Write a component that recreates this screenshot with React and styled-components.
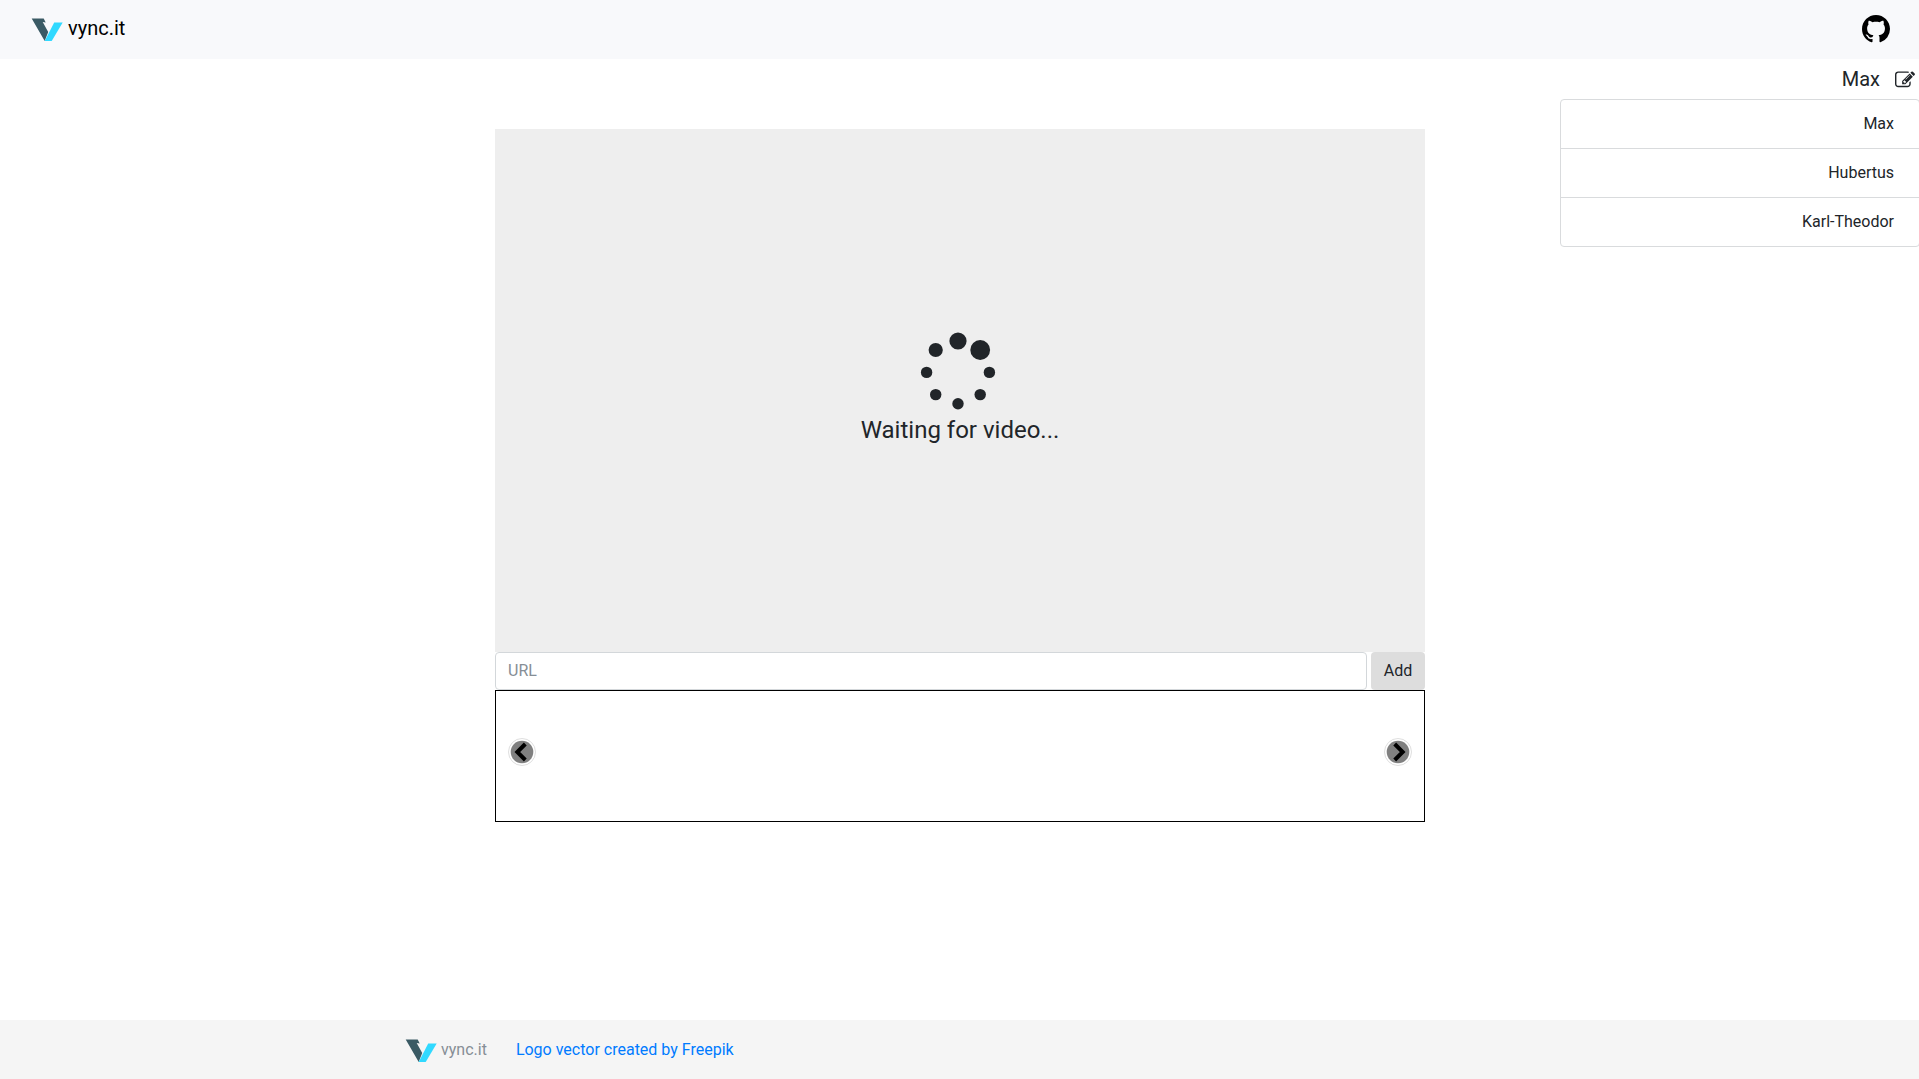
import React from 'react';
import styled, { createGlobalStyle } from 'styled-components';

const GlobalStyle = createGlobalStyle`
  *, *::before, *::after { box-sizing: border-box; }
  body {
    margin: 0;
    background: #fff;
    color: #212529;
    font: 400 16px/1.5 Roboto, "Liberation Sans", sans-serif;
    overflow: hidden;
  }
`;

const Page = styled.div`
  display: flex;
  flex-direction: column;
  height: 100vh;
`;

const Header = styled.header`
  display: flex;
  flex: none;
  align-items: center;
  justify-content: space-between;
  height: 59px;
  padding: 0 29px 2px 31px;
  background: #f8f9fb;
`;

const Brand = styled.a`
  display: flex;
  align-items: center;
  gap: ${(p) => (p.$muted ? '4px' : '5px')};
  color: ${(p) => (p.$muted ? '#868e96' : '#000')};
  font-size: ${(p) => (p.$muted ? '16px' : '20px')};
  padding-bottom: ${(p) => (p.$muted ? '0' : '2px')};

  svg {
    display: block;
    margin-top: ${(p) => (p.$muted ? '2px' : '5px')};
  }
`;

const RepoLink = styled.a`
  display: flex;
  color: #000;
`;

const Main = styled.main`
  display: grid;
  flex: 1;
  grid-template-columns: 495px 930px 135px 360px;
  align-items: start;
`;

const Room = styled.section`
  grid-column: 2;
  display: flex;
  flex-direction: column;
  padding-top: 70px;
`;

const Player = styled.div`
  display: flex;
  flex-direction: column;
  align-items: center;
  height: 523px;
  padding-top: 202px;
  background: #eee;
`;

const Waiting = styled.p`
  margin: 0;
  padding-top: 2px;
  font-size: 24px;
  line-height: 36px;
`;

const UrlForm = styled.form`
  display: flex;
  gap: 4px;
  height: 38px;
`;

const UrlInput = styled.input`
  flex: 1;
  min-width: 0;
  padding: 6px 12px;
  border: 1px solid #d3d7da;
  border-radius: 4px;
  background: #fff;
  font: inherit;

  &::placeholder { color: #868e96; opacity: 1; }
`;

const AddButton = styled.button`
  width: 54px;
  padding: 0;
  border: 0;
  border-radius: 4px;
  background: #ddd;
  color: #212529;
  font: inherit;
`;

const Playlist = styled.div`
  display: flex;
  align-items: center;
  justify-content: space-between;
  height: 132px;
  padding: 0 12px 8px;
  border: 1px solid #000;
`;

const ArrowButton = styled.button`
  display: flex;
  padding: 0;
  border: 0;
  background: none;
  transform: ${(p) => (p.$next ? 'scaleX(-1)' : 'none')};
`;

const Sidebar = styled.aside`
  grid-column: 4;
  display: flex;
  flex-direction: column;
`;

const Profile = styled.div`
  display: flex;
  align-items: center;
  justify-content: flex-end;
  gap: 15px;
  height: 40px;
  padding-right: 5px;
  font-size: 20px;

  svg { margin-top: 1px; }
`;

const UserList = styled.ul`
  margin: 0;
  padding: 0;
  border: 1px solid #d9dbdd;
  border-radius: 4px;
  background: #fff;
  list-style: none;
`;

const User = styled.li`
  height: 49px;
  padding: 12px 25px 12px 20px;
  text-align: right;

  & + & { border-top: 1px solid #d9dbdd; }
  &:first-child { height: 48px; }
`;

const Footer = styled.footer`
  display: flex;
  flex: none;
  align-items: center;
  gap: 29px;
  height: 59px;
  padding-left: 405px;
  background: #f5f5f5;
`;

const CreditLink = styled.a`
  color: #007bff;
`;

const Logo = () => (
  <svg width="32" height="24" viewBox="-.7 0 32 24" fill="none">
    <path d="M0 .5h12l2 4-3-.5 5.5 10-3.5 9Z" fill="#3a5a64" />
    <path d="M22.5 4.5H31L20 23h-7Z" fill="#30d9ff" />
  </svg>
);

const GithubMark = () => (
  <svg width="28" height="28" viewBox="0 0 16 16" fill="currentColor">
    <path fillRule="evenodd" d="M8 0C3.58 0 0 3.58 0 8c0 3.54 2.29 6.53 5.47 7.59.4.07.55-.17.55-.38 0-.19-.01-.82-.01-1.49-2.01.37-2.53-.49-2.69-.94-.09-.23-.48-.94-.82-1.13-.28-.15-.68-.52-.01-.53.63-.01 1.08.58 1.23.82.72 1.21 1.87.87 2.33.66.07-.52.28-.87.51-1.07-1.78-.2-3.64-.89-3.64-3.95 0-.87.31-1.59.82-2.15-.08-.2-.36-1.02.08-2.12 0 0 .67-.21 2.2.82.64-.18 1.32-.27 2-.27s1.36.09 2 .27c1.53-1.04 2.2-.82 2.2-.82.44 1.1.16 1.92.08 2.12.51.56.82 1.27.82 2.15 0 3.07-1.87 3.75-3.65 3.95.29.25.54.73.54 1.48 0 1.07-.01 1.93-.01 2.2 0 .21.15.46.55.38A8.01 8.01 0 0 0 16 8c0-4.42-3.58-8-8-8Z" />
  </svg>
);

const EditIcon = () => (
  <svg width="20" height="20" viewBox="0 0 1792 1792" fill="currentColor">
    <path d="M888 1184l116-116-152-152-116 116v56h96v96h56zm440-720q-16-16-33 1l-350 350q-17 17-1 33t33-1l350-350q17-17 1-33zm80 594v190q0 119-84.5 203.5t-203.5 84.5h-832q-119 0-203.5-84.5t-84.5-203.5v-832q0-119 84.5-203.5t203.5-84.5h832q63 0 117 25 15 7 18 23 3 17-9 29l-49 49q-14 14-32 8-23-6-45-6h-832q-66 0-113 47t-47 113v832q0 66 47 113t113 47h832q66 0 113-47t47-113v-126q0-13 9-22l64-64q15-15 35-7t20 29zm-96-738l288 288-672 672h-288v-288zm444 132l-92 92-288-288 92-92q28-28 68-28t68 28l152 152q28 28 28 68t-28 68z" />
  </svg>
);

const dots = [
  [38, 9, 8.6], [15.7, 18, 7.1], [6.6, 40.4, 5.7], [15.7, 62.6, 5.7],
  [38, 71.8, 5.7], [60.2, 62.6, 5.7], [69.4, 40.4, 5.7], [60.2, 18, 9.9],
];

const Spinner = () => (
  <svg width="80" height="79" viewBox="0 -1 80 79" fill="#212529">
    {dots.map(([x, y, r]) => <circle key={`${x}-${y}`} cx={x} cy={y} r={r} />)}
  </svg>
);

const Arrow = () => (
  <svg width="28" height="28" viewBox="0 0 28 28" fill="none">
    <circle cx="14" cy="14" r="13.5" fill="#fff" stroke="#d6d6d6" strokeWidth=".8" />
    <circle cx="14" cy="14" r="11.3" fill="#808080" />
    <path d="m17.3 6-8 8 8 8" stroke="#000" strokeWidth="4" />
  </svg>
);

const users = ['Max', 'Hubertus', 'Karl-Theodor'];

export default function App() {
  return (
    <Page>
      <GlobalStyle />
      <Header>
        <Brand><Logo />vync.it</Brand>
        <RepoLink aria-label="GitHub"><GithubMark /></RepoLink>
      </Header>
      <Main>
        <Room>
          <Player>
            <Spinner />
            <Waiting>Waiting for video...</Waiting>
          </Player>
          <UrlForm onSubmit={(e) => e.preventDefault()}>
            <UrlInput placeholder="URL" />
            <AddButton>Add</AddButton>
          </UrlForm>
          <Playlist>
            <ArrowButton aria-label="Previous"><Arrow /></ArrowButton>
            <ArrowButton $next aria-label="Next"><Arrow /></ArrowButton>
          </Playlist>
        </Room>
        <Sidebar>
          <Profile>Max<EditIcon /></Profile>
          <UserList>
            {users.map((name) => <User key={name}>{name}</User>)}
          </UserList>
        </Sidebar>
      </Main>
      <Footer>
        <Brand $muted><Logo />vync.it</Brand>
        <CreditLink>Logo vector created by Freepik</CreditLink>
      </Footer>
    </Page>
  );
}
